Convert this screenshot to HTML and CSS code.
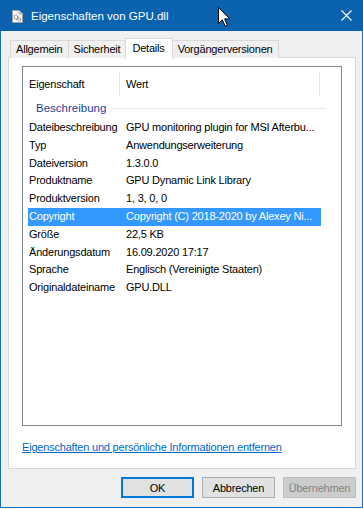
FILE: index.html
```html
<!DOCTYPE html>
<html lang="de">
<head>
    <meta charset="UTF-8">
    <title>Eigenschaften von GPU.dll</title>
    <link rel="stylesheet" href="styles.css">
</head>
<body>
    <div class="window">
        <!-- Title bar -->
        <div class="titlebar">
            <svg class="app-icon" width="11" height="13" viewBox="0 0 11 13">
                <path d="M0.5 0.5 H7 L10.5 4 V12.5 H0.5 Z" fill="#f7f7f7" stroke="#a0a0a0"/>
                <path d="M7 0.5 V4 H10.5" fill="#e0e0e0" stroke="#a0a0a0"/>
                <circle cx="4" cy="7" r="2" fill="none" stroke="#8a8a8a" stroke-width="1.4" stroke-dasharray="1.2 0.8"/>
                <circle cx="7" cy="9.5" r="1.4" fill="none" stroke="#8a8a8a" stroke-width="1.2" stroke-dasharray="1 0.7"/>
            </svg>
            <span class="title">Eigenschaften von GPU.dll</span>
            <svg class="close-icon" width="11" height="11" viewBox="0 0 11 11">
                <path d="M0.5 0.5 L10.5 10.5 M10.5 0.5 L0.5 10.5" stroke="#fff" stroke-width="1.1"/>
            </svg>
        </div>

        <div class="content">
            <!-- Tabs -->
            <div class="tabs">
                <div class="tab">Allgemein</div>
                <div class="tab">Sicherheit</div>
                <div class="tab active">Details</div>
                <div class="tab">Vorgängerversionen</div>
            </div>

            <div class="panel">
                <div class="listview">
                    <div class="lv-header">
                        <div class="col col-name">Eigenschaft</div>
                        <div class="col col-value">Wert</div>
                        <div class="col col-rest"></div>
                    </div>
                    <div class="group">
                        <span class="group-title">Beschreibung</span>
                        <span class="group-line"></span>
                    </div>
                    <div class="row"><span class="name">Dateibeschreibung</span><span class="value">GPU monitoring plugin for MSI Afterbu...</span></div>
                    <div class="row"><span class="name">Typ</span><span class="value">Anwendungserweiterung</span></div>
                    <div class="row"><span class="name">Dateiversion</span><span class="value">1.3.0.0</span></div>
                    <div class="row"><span class="name">Produktname</span><span class="value">GPU Dynamic Link Library</span></div>
                    <div class="row"><span class="name">Produktversion</span><span class="value">1, 3, 0, 0</span></div>
                    <div class="row selected"><span class="name">Copyright</span><span class="value">Copyright (C) 2018-2020 by Alexey Ni...</span></div>
                    <div class="row"><span class="name">Größe</span><span class="value">22,5 KB</span></div>
                    <div class="row"><span class="name">Änderungsdatum</span><span class="value">16.09.2020 17:17</span></div>
                    <div class="row"><span class="name">Sprache</span><span class="value">Englisch (Vereinigte Staaten)</span></div>
                    <div class="row"><span class="name">Originaldateiname</span><span class="value">GPU.DLL</span></div>
                </div>
                <a class="remove-link" href="#">Eigenschaften und persönliche Informationen entfernen</a>
            </div>

            <!-- Dialog buttons -->
            <div class="buttons">
                <button class="btn default">OK</button>
                <button class="btn">Abbrechen</button>
                <button class="btn" disabled>Übernehmen</button>
            </div>
        </div>

        <!-- Mouse pointer over the title bar -->
        <svg class="cursor" width="13" height="20" viewBox="0 0 13 20">
            <path d="M0.5 0.5 V16.5 L4.3 12.8 L7.2 19.2 L9.4 18.2 L6.6 11.9 H11.8 Z" fill="#fff" stroke="#000" stroke-linejoin="round"/>
        </svg>
    </div>
</body>
</html>
```

FILE: styles.css
```css
body {
    margin: 0;
    background: #fff;
    font-family: "Liberation Sans", Arial, sans-serif;
    font-size: 11px;
    letter-spacing: -0.2px;
    color: #000;
}
.window {
    position: relative;
    width: 363px;
    height: 508px;
    box-sizing: border-box;
    background: #f0f0f0;
    border: 1px solid #1a70c0;
    border-top: none;
}
.titlebar {
    height: 31px;
    margin: 0 -1px;
    padding-left: 12px;
    background: #0b63b0;
    display: flex;
    align-items: center;
    color: #fff;
}
.app-icon {
    margin-top: 1px;
}
.title {
    margin-left: 8px;
    font-size: 11.5px;
    letter-spacing: 0;
}
.close-icon {
    margin-left: auto;
    margin-right: 11px;
}
.content {
    padding: 7px 6px 0 7px;
}
.tabs {
    display: flex;
    align-items: flex-end;
    padding-left: 2px;
    height: 20px;
    margin-bottom: -1px;
    position: relative;
}
.tab {
    height: 18px;
    box-sizing: border-box;
    padding: 2px 5px 0 5px;
    border: 1px solid #d9d9d9;
    border-bottom: none;
    margin-right: -1px;
    background: #f0f0f0;
}
.tab.active {
    height: 21px;
    margin-bottom: -1px;
    padding: 3px 7px 0 6px;
    background: #fff;
    position: relative;
    z-index: 1;
}
.panel {
    height: 412px;
    box-sizing: border-box;
    border: 1px solid #d9d9d9;
    background: #fff;
    padding: 8px 13px 0 13px;
}
.listview {
    height: 360px;
    box-sizing: border-box;
    border: 1px solid #828790;
}
.lv-header {
    display: flex;
    height: 31px;
    padding-top: 5px;
    box-sizing: border-box;
}
.col {
    height: 24px;
    line-height: 24px;
    padding-left: 6px;
    box-sizing: border-box;
    border-right: 1px solid #e5e5e5;
}
.col-name {
    width: 97px;
}
.col-value {
    width: 200px;
}
.col-rest {
    border-right: none;
}
.group {
    display: flex;
    align-items: center;
    height: 20px;
    padding-left: 13px;
    margin-bottom: 1px;
    color: #1e3e99;
    font-size: 11.5px;
    letter-spacing: 0;
}
.group-line {
    flex: none;
    width: 215px;
    height: 1px;
    margin-left: 5px;
    background: #e2eaf5;
}
.row {
    display: flex;
    height: 17.8px;
    line-height: 17.8px;
    width: 293px;
    margin-left: 5px;
    white-space: nowrap;
}
.row .name {
    width: 97px;
    padding-left: 1px;
}
.row .value {
    padding-left: 0;
}
.row.selected {
    background: #3399ff;
    color: #fff;
}
.remove-link {
    display: inline-block;
    margin-top: 15px;
    color: #0066cc;
    text-decoration: underline;
}
.buttons {
    display: flex;
    justify-content: flex-end;
    gap: 8px;
    margin-top: 8px;
}
.btn {
    width: 73px;
    height: 21px;
    padding: 0;
    font-family: inherit;
    font-size: 11px;
    letter-spacing: -0.2px;
    color: #000;
    background: #e1e1e1;
    border: 1px solid #adadad;
}
.btn.default {
    border: 2px solid #0078d7;
}
.btn:disabled {
    background: #cccccc;
    border-color: #bfbfbf;
    color: #838383;
}
.cursor {
    position: absolute;
    left: 217px;
    top: 7px;
}
```
